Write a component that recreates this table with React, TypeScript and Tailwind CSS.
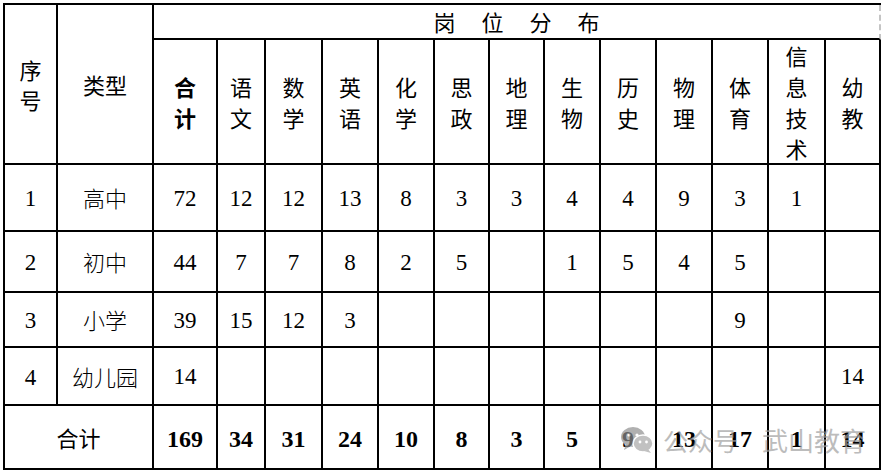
import React from "react";

const subjects: string[][] = [
  ["合", "计"],
  ["语", "文"],
  ["数", "学"],
  ["英", "语"],
  ["化", "学"],
  ["思", "政"],
  ["地", "理"],
  ["生", "物"],
  ["历", "史"],
  ["物", "理"],
  ["体", "育"],
  ["信", "息", "技", "术"],
  ["幼", "教"],
];

const rows: { no: string; type: string; vals: string[] }[] = [
  { no: "1", type: "高中", vals: ["72", "12", "12", "13", "8", "3", "3", "4", "4", "9", "3", "1", ""] },
  { no: "2", type: "初中", vals: ["44", "7", "7", "8", "2", "5", "", "1", "5", "4", "5", "", ""] },
  { no: "3", type: "小学", vals: ["39", "15", "12", "3", "", "", "", "", "", "", "9", "", ""] },
  { no: "4", type: "幼儿园", vals: ["14", "", "", "", "", "", "", "", "", "", "", "", "14"] },
];

const totals = ["169", "34", "31", "24", "10", "8", "3", "5", "9", "13", "17", "1", "14"];

const sans = "font-['Noto_Sans_CJK_SC','Noto_Sans',sans-serif]";
const serif = "font-['Liberation_Serif','Noto_Sans_CJK_SC',serif]";
const cell = "border-r-2 border-b-2 border-black flex items-center justify-center";

function WeChatIcon() {
  return (
    <svg width="34" height="28" viewBox="0 0 34 28">
      <ellipse cx="13" cy="11" rx="12" ry="10" fill="#8f8f8f" />
      <path d="M6 18 L4 24 L11 20 Z" fill="#8f8f8f" />
      <circle cx="9" cy="9" r="1.6" fill="#fff" />
      <circle cx="17" cy="9" r="1.6" fill="#fff" />
      <ellipse cx="23" cy="17.5" rx="10" ry="8.5" fill="#a8a8a8" stroke="#fff" strokeWidth="1.5" />
      <path d="M28 23 L31 27 L24 25 Z" fill="#a8a8a8" />
      <circle cx="20" cy="16" r="1.4" fill="#fff" />
      <circle cx="26.5" cy="16" r="1.4" fill="#fff" />
    </svg>
  );
}

export default function App() {
  return (
    <div className="w-[886px] h-[474px] bg-white overflow-hidden">
      <div className="relative ml-[3px] mt-[3px] w-fit border-l-2 border-t-2 border-black grid grid-cols-[53px_96px_64px_48px_57px_56px_56px_55px_55px_56px_56px_56px_56px_57px_55px] grid-rows-[35px_125px_67px_61px_55px_58px_64px] text-black">
        {/* 序号 */}
        <div className={`${cell} row-span-2 ${sans} text-[22px] leading-[30px] flex-col`}>
          <span>序</span>
          <span>号</span>
        </div>
        {/* 类型 */}
        <div className={`${cell} row-span-2 ${sans} text-[22px]`}>类型</div>
        {/* 岗位分布 */}
        <div className={`col-span-13 border-b-2 border-b-black border-r-2 border-r-[#c4c4c4] [border-right-style:dashed] flex items-center justify-center gap-[26px] ${sans} text-[22px]`}>
          <span>岗</span>
          <span>位</span>
          <span>分</span>
          <span>布</span>
        </div>
        {subjects.map((s, i) => (
          <div key={i} className={`${cell} flex-col ${sans} text-[22px] leading-[31px] ${i === 0 ? "font-bold" : ""}`}>
            {s.map((c, j) => (
              <span key={j}>{c}</span>
            ))}
          </div>
        ))}
        {rows.map((r) => (
          <React.Fragment key={r.no}>
            <div className={`${cell} ${serif} text-[23px] pt-[4px]`}>{r.no}</div>
            <div className={`${cell} ${sans} font-light text-[22px]`}>{r.type}</div>
            {r.vals.map((v, i) => (
              <div key={i} className={`${cell} ${serif} text-[23px] pt-[3px]`}>{v}</div>
            ))}
          </React.Fragment>
        ))}
        <div className={`${cell} col-span-2 ${sans} text-[22px]`}>合计</div>
        {totals.map((v, i) => (
          <div key={i} className={`${cell} ${serif} font-bold text-[24px] pt-[3px]`}>{v}</div>
        ))}

        {/* watermark */}
        <div className="absolute left-[615px] top-[421px] flex items-center opacity-70 pointer-events-none">
          <WeChatIcon />
          <span className={`ml-[9px] ${sans} text-[25px] leading-none text-[#a0a0a0]`}>公众号</span>
          <span className={`ml-[24px] ${sans} text-[26px] leading-none text-[#a0a0a0]`}>武山教育</span>
        </div>
      </div>
    </div>
  );
}
